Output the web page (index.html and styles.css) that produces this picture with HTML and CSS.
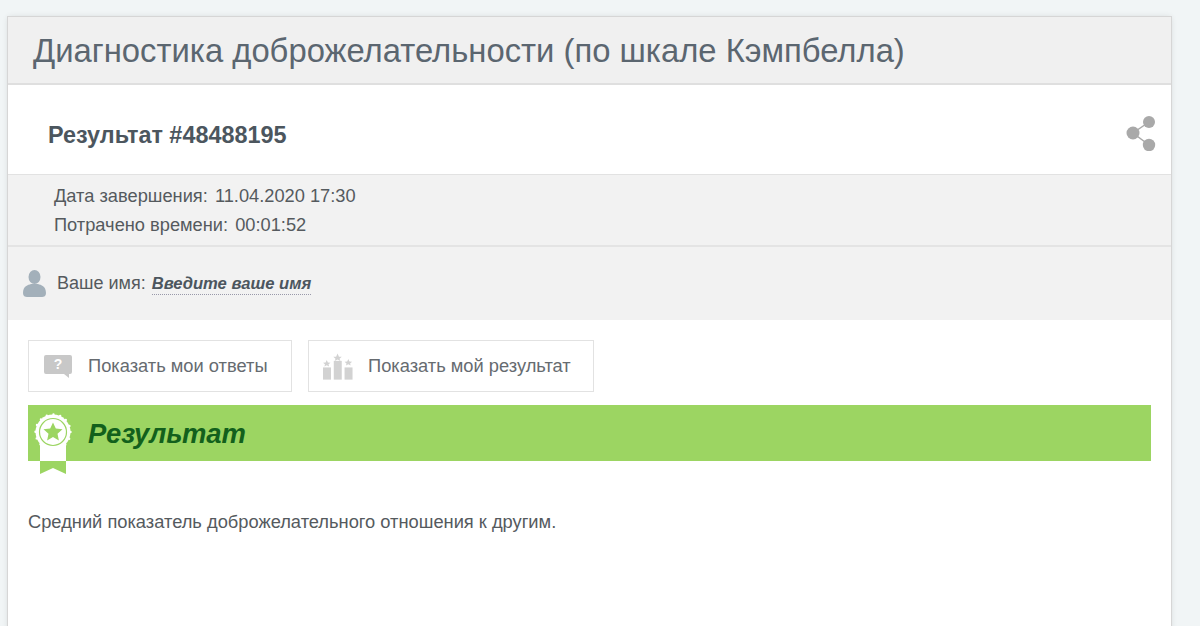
FILE: index.html
```html
<!DOCTYPE html>
<html lang="ru">
<head>
    <meta charset="UTF-8">
    <title>Диагностика доброжелательности</title>
    <link rel="stylesheet" href="styles.css">
</head>
<body>
    <div class="card">
        <h1 class="card-title">Диагностика доброжелательности (по шкале Кэмпбелла)</h1>

        <div class="result-head">
            <h2>Результат #48488195</h2>
            <svg class="share-icon" viewBox="0 0 30 36" width="30" height="36">
                <path d="M23 7 L7 18 L23 30" fill="none" stroke="#a9a9a9" stroke-width="1.5"/>
                <circle cx="23" cy="7" r="6" fill="#a9a9a9"/>
                <circle cx="7" cy="18" r="6.5" fill="#a9a9a9"/>
                <circle cx="23" cy="30" r="6.2" fill="#a9a9a9"/>
            </svg>
        </div>

        <div class="meta">
            <div>Дата завершения: <span class="meta-value">11.04.2020 17:30</span></div>
            <div>Потрачено времени: <span class="meta-value">00:01:52</span></div>
        </div>

        <div class="name-row">
            <svg class="user-icon" viewBox="0 0 23 27" width="23" height="27">
                <ellipse cx="11.5" cy="7" rx="6" ry="7" fill="#a3b0ba"/>
                <path d="M0 23 C0 16 5 15 8 14 L15 14 C18 15 23 16 23 23 C23 26 21 27 19 27 L4 27 C2 27 0 26 0 23 Z" fill="#a3b0ba"/>
            </svg>
            <span>Ваше имя:</span>
            <a class="name-link">Введите ваше имя</a>
        </div>

        <div class="content">
            <div class="buttons">
                <button class="btn btn-answers">
                    <svg viewBox="0 0 30 25" width="30" height="25">
                        <path d="M3 1 H27 Q29 1 29 3 V18 Q29 20 27 20 H26 V24 L21 20 H3 Q1 20 1 18 V3 Q1 1 3 1 Z" fill="#c8c8c8"/>
                        <text x="15" y="15" class="btn-mark">?</text>
                    </svg>
                    Показать мои ответы
                </button>
                <button class="btn btn-score">
                    <svg viewBox="0 0 32 28" width="30" height="27">
                        <rect x="0" y="15" width="8.5" height="13" fill="#d2d2d2"/>
                        <rect x="11.5" y="8" width="8.5" height="20" fill="#d2d2d2"/>
                        <rect x="23" y="15" width="8.5" height="13" fill="#d2d2d2"/>
                        <polygon points="15.5,0 17,3.5 20,3.5 17.7,5.6 18.5,8 15.5,6.6 12.5,8 13.3,5.6 11,3.5 14,3.5" fill="#d2d2d2"/>
                        <polygon points="4,7 5.2,9.7 8,9.9 5.9,11.7 6.5,14 4,12.7 1.5,14 2.1,11.7 0,9.9 2.8,9.7" fill="#d2d2d2"/>
                        <polygon points="27,6 28.2,8.7 31,8.9 28.9,10.7 29.5,13 27,11.7 24.5,13 25.1,10.7 23,8.9 25.8,8.7" fill="#d2d2d2"/>
                    </svg>
                    Показать мой результат
                </button>
            </div>

            <div class="banner">
                <svg class="badge" viewBox="0 0 40 64" width="40" height="64">
                    <rect x="7" y="24" width="26" height="25" fill="#fff"/>
                    <path d="M7 49 H33 V62 L20 56 L7 62 Z" fill="#9cd562"/>
                    <circle cx="20" cy="20" r="17.5" fill="#fff"/>
                    <circle cx="20" cy="20" r="17.5" fill="none" stroke="#fff" stroke-width="2.4" stroke-linecap="round" stroke-dasharray="0 6.87"/>
                    <circle cx="20" cy="20" r="13.5" fill="none" stroke="#9cd562" stroke-width="1.2"/>
                    <polygon points="20,10.5 22.8,16.6 29.5,17.3 24.5,21.8 25.9,28.4 20,25 14.1,28.4 15.5,21.8 10.5,17.3 17.2,16.6" fill="#9cd562"/>
                </svg>
                <h3>Результат</h3>
            </div>

            <p class="result-text">Средний показатель доброжелательного отношения к другим.</p>
        </div>
    </div>
</body>
</html>
```
FILE: styles.css
```css
body {
    margin: 0;
    height: 626px;
    overflow: hidden;
    background: #f1f5f6;
    font-family: 'Liberation Sans', Arial, sans-serif;
    color: #555a5e;
}

.card {
    width: 1163px;
    margin: 17px 0 0 8px;
    height: 640px;
    box-sizing: border-box;
    background: #fff;
    box-shadow: 0 0 0 1px #d6d6d6, 0 0 6px rgba(0, 0, 0, 0.12);
}

.card-title {
    margin: 0;
    height: 68px;
    box-sizing: border-box;
    padding: 15px 0 0 25px;
    background: #f0f0f0;
    border-bottom: 2px solid #dfdfdf;
    font-size: 32.8px;
    line-height: 38px;
    font-weight: normal;
    color: #5b6670;
}

.result-head {
    height: 90px;
    box-sizing: border-box;
    display: flex;
    align-items: center;
    justify-content: space-between;
    padding: 11px 15px 0 40px;
    border-bottom: 1px solid #e2e2e2;
}

.result-head h2 {
    margin: 0;
    font-size: 23.4px;
    color: #4c565e;
}

.share-icon {
    align-self: flex-start;
    margin-top: 19px;
}

.meta {
    height: 72px;
    box-sizing: border-box;
    padding: 6px 0 0 46px;
    background: #f2f2f2;
    border-bottom: 2px solid #e4e4e4;
    font-size: 18.25px;
    line-height: 29px;
}

.meta-value {
    margin-left: 2px;
}

.name-row {
    height: 73px;
    box-sizing: border-box;
    display: flex;
    align-items: center;
    padding: 0 0 0 15px;
    background: #f2f2f2;
    font-size: 18px;
    gap: 6px;
}

.user-icon {
    margin-right: 5px;
}

.name-link {
    margin-top: 2px;
    font-weight: bold;
    font-style: italic;
    font-size: 16.6px;
    color: #4c565e;
    border-bottom: 1px dotted #99a;
}

.content {
    padding: 20px;
}

.buttons {
    display: flex;
    gap: 16px;
}

.btn {
    height: 52px;
    display: flex;
    align-items: center;
    box-sizing: border-box;
    background: #fff;
    border: 1px solid #e2e2e2;
    font-family: inherit;
    font-size: 18.3px;
    color: #666b70;
    padding: 0;
}

.btn-answers {
    width: 264px;
    padding-left: 14px;
    gap: 15px;
}

.btn-score {
    width: 286px;
    padding-left: 14px;
    gap: 15px;
}

.btn-mark {
    font-size: 14px;
    font-weight: bold;
    fill: #fff;
    text-anchor: middle;
}

.banner {
    position: relative;
    margin-top: 13px;
    height: 56px;
    background: #9cd562;
    display: flex;
    align-items: center;
    padding-left: 60px;
}

.badge {
    position: absolute;
    left: 5px;
    top: 7px;
}

.banner h3 {
    margin: 2px 0 0;
    font-size: 27.4px;
    font-style: italic;
    color: #12601c;
}

.result-text {
    margin: 50px 0 0;
    font-size: 18.3px;
    line-height: 22px;
}
```
